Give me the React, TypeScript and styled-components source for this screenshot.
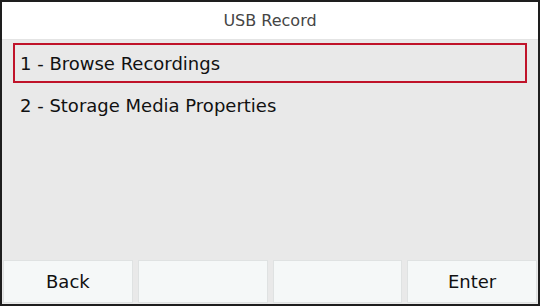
import * as React from 'react'
import styled, { createGlobalStyle } from 'styled-components'

const GlobalStyle = createGlobalStyle`
  html, body {
    margin: 0;
    padding: 0;
    background: #ffffff;
  }
`

const Screen = styled.div`
  width: 540px;
  height: 306px;
  box-sizing: border-box;
  border: 2px solid #1e1e1e;
  display: flex;
  flex-direction: column;
  background: #e9e9e9;
  font-family: 'DejaVu Sans', Tahoma, sans-serif;
  overflow: hidden;
`

const TitleBar = styled.div`
  height: 38px;
  flex: none;
  background: #ffffff;
  color: #454545;
  font-size: 16px;
  display: flex;
  align-items: center;
  justify-content: center;
  border-bottom: 1px solid #e4e4e4;
  box-sizing: border-box;
`

const MenuList = styled.div`
  flex: 1;
  display: flex;
  flex-direction: column;
  gap: 2px;
  padding: 3px 11px 0;
`

const MenuRow = styled.div<{ $selected?: boolean }>`
  height: 40px;
  box-sizing: border-box;
  display: flex;
  align-items: center;
  padding-left: 5px;
  border: 2px solid ${p => (p.$selected ? '#c0132a' : 'transparent')};
  color: #111111;
  font-size: 18px;
`

const SoftKeyBar = styled.div`
  height: 44px;
  flex: none;
  display: flex;
  gap: 5px;
  padding: 0 1px 1px;
  box-sizing: border-box;
`

const SoftKey = styled.div`
  flex: 1;
  box-sizing: border-box;
  background: #f5f8f8;
  border: 1px solid #dfe2e2;
  display: flex;
  align-items: center;
  justify-content: center;
  color: #111111;
  font-size: 18px;
`

const items = ['1 - Browse Recordings', '2 - Storage Media Properties']
const keys = ['Back', '', '', 'Enter']

const App: React.FC = () => (
  <>
    <GlobalStyle />
    <Screen>
      <TitleBar>USB Record</TitleBar>
      <MenuList>
        {items.map((label, i) => (
          <MenuRow key={label} $selected={i === 0}>{label}</MenuRow>
        ))}
      </MenuList>
      <SoftKeyBar>
        {keys.map((k, i) => (
          <SoftKey key={i}>{k}</SoftKey>
        ))}
      </SoftKeyBar>
    </Screen>
  </>
)

export default App
